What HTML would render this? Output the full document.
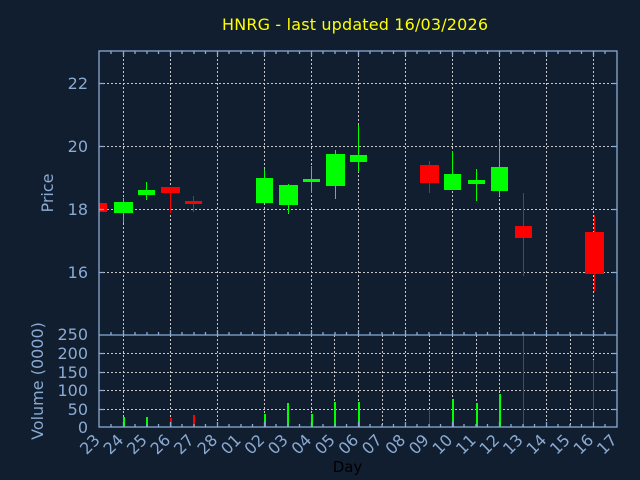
<!DOCTYPE html>
<html><head><meta charset="utf-8"><style>
html,body{margin:0;padding:0;background:#101e2f;}
svg{display:block;}
text{font-family:"DejaVu Sans","Liberation Sans",sans-serif;}
</style></head><body>
<svg width="640" height="480" viewBox="0 0 640 480" xmlns="http://www.w3.org/2000/svg">
<rect width="640" height="480" fill="#101e2f"/>
<text x="355" y="30" font-size="16" fill="#ffff00" text-anchor="middle" textLength="266">HNRG - last updated 16/03/2026</text>

<g stroke="#c8c8c8" stroke-width="1" stroke-dasharray="2,2" fill="none" shape-rendering="crispEdges">
<path d="M99 83.5H617M99 146.5H617M99 209.5H617M99 272.5H617"/>
<path d="M123.5 51V335M170.5 51V335M217.5 51V335M264.5 51V335M311.5 51V335M358.5 51V335M405.5 51V335M452.5 51V335M499.5 51V335M546.5 51V335M593.5 51V335"/>
<path d="M99 409.5H617M99 390.5H617M99 372.5H617M99 353.5H617"/>
<path d="M123.5 335V427M170.5 335V427M217.5 335V427M264.5 335V427M311.5 335V427M358.5 335V427M405.5 335V427M452.5 335V427M499.5 335V427M546.5 335V427M593.5 335V427M334.5 335V427M382.5 335V427M429.5 335V427M476.5 335V427M523.5 335V427M570.5 335V427"/>
</g>

<g fill="#ff0000" stroke="none" shape-rendering="crispEdges">
<rect x="99" y="203" width="8" height="9"/>
<rect x="170" y="187" width="1" height="26"/><rect x="161" y="187" width="19" height="6"/>
<rect x="193" y="196" width="1" height="16"/><rect x="185" y="201" width="17" height="3"/>
<rect x="429" y="161" width="1" height="32"/><rect x="420" y="165" width="19" height="18"/>
<rect x="523" y="193" width="1" height="83"/><rect x="515" y="226" width="17" height="12"/>
<rect x="594" y="215" width="1" height="77"/><rect x="585" y="232" width="19" height="42"/>
</g>
<g fill="#00ff00" stroke="none" shape-rendering="crispEdges">
<rect x="123" y="198" width="1" height="25"/><rect x="114" y="202" width="19" height="11"/>
<rect x="146" y="182" width="1" height="18"/><rect x="138" y="190" width="17" height="5"/>
<rect x="264" y="169" width="1" height="34"/><rect x="256" y="178" width="17" height="25"/>
<rect x="288" y="184" width="1" height="30"/><rect x="279" y="185" width="19" height="20"/>
<rect x="311" y="166" width="1" height="27"/><rect x="303" y="179" width="17" height="3"/>
<rect x="335" y="150" width="1" height="49"/><rect x="326" y="154" width="19" height="32"/>
<rect x="358" y="125" width="1" height="47"/><rect x="350" y="155" width="17" height="7"/>
<rect x="452" y="151" width="1" height="39"/><rect x="444" y="174" width="17" height="16"/>
<rect x="476" y="169" width="1" height="32"/><rect x="468" y="180" width="17" height="4"/>
<rect x="499" y="141" width="1" height="55"/><rect x="491" y="167" width="17" height="24"/>
</g>

<g shape-rendering="crispEdges">
<g fill="#00ff00">
<rect x="123" y="417" width="2" height="10"/><rect x="146" y="417" width="2" height="10"/>
<rect x="264" y="414" width="2" height="13"/><rect x="287" y="403" width="2" height="24"/>
<rect x="311" y="414" width="2" height="13"/><rect x="334" y="402" width="2" height="25"/>
<rect x="358" y="402" width="2" height="25"/><rect x="452" y="399" width="2" height="28"/>
<rect x="476" y="403" width="2" height="24"/><rect x="499" y="394" width="2" height="33"/>
</g>
<g fill="#ff0000">
<rect x="170" y="418" width="2" height="9"/><rect x="193" y="415" width="2" height="12"/>
<rect x="429" y="410" width="1" height="17"/><rect x="523" y="335" width="1" height="92"/>
<rect x="593" y="360" width="1" height="67"/>
</g>
</g>

<g stroke="#8aaad2" stroke-width="1.3" fill="none">
<rect x="99" y="51" width="518" height="376"/>
<path d="M99 335H617"/>
<path d="M99 83.5h5M99 146.5h5M99 209.5h5M99 272.5h5M612 83.5h5M612 146.5h5M612 209.5h5M612 272.5h5"/>
<path d="M99 409.5h5M99 390.5h5M99 372.5h5M99 353.5h5M612 409.5h5M612 390.5h5M612 372.5h5M612 353.5h5"/>
<path d="M111 51v3M123.5 51v5M135 51v3M147 51v3M158.5 51v3M170.5 51v5M182 51v3M194 51v3M205.5 51v3M217.5 51v5M229 51v3M241 51v3M252.5 51v3M264.5 51v5M276 51v3M288 51v3M299.5 51v3M311.5 51v5M323 51v3M335 51v3M346.5 51v3M358.5 51v5M370 51v3M382 51v3M393.5 51v3M405.5 51v5M417 51v3M429 51v3M440.5 51v3M452.5 51v5M464 51v3M476 51v3M487.5 51v3M499.5 51v5M511 51v3M523 51v3M534.5 51v3M546.5 51v5M558 51v3M570 51v3M581.5 51v3M593.5 51v5M605 51v3"/>
<path d="M111 335v-3M123.5 335v-5M135 335v-3M147 335v-3M158.5 335v-3M170.5 335v-5M182 335v-3M194 335v-3M205.5 335v-3M217.5 335v-5M229 335v-3M241 335v-3M252.5 335v-3M264.5 335v-5M276 335v-3M288 335v-3M299.5 335v-3M311.5 335v-5M323 335v-3M335 335v-3M346.5 335v-3M358.5 335v-5M370 335v-3M382 335v-3M393.5 335v-3M405.5 335v-5M417 335v-3M429 335v-3M440.5 335v-3M452.5 335v-5M464 335v-3M476 335v-3M487.5 335v-3M499.5 335v-5M511 335v-3M523 335v-3M534.5 335v-3M546.5 335v-5M558 335v-3M570 335v-3M581.5 335v-3M593.5 335v-5M605 335v-3"/>
<path d="M111 427v-3M123.5 427v-5M135 427v-3M147 427v-3M158.5 427v-3M170.5 427v-5M182 427v-3M194 427v-3M205.5 427v-3M217.5 427v-5M229 427v-3M241 427v-3M252.5 427v-3M264.5 427v-5M276 427v-3M288 427v-3M299.5 427v-3M311.5 427v-5M323 427v-3M335 427v-3M346.5 427v-3M358.5 427v-5M370 427v-3M382 427v-3M393.5 427v-3M405.5 427v-5M417 427v-3M429 427v-3M440.5 427v-3M452.5 427v-5M464 427v-3M476 427v-3M487.5 427v-3M499.5 427v-5M511 427v-3M523 427v-3M534.5 427v-3M546.5 427v-5M558 427v-3M570 427v-3M581.5 427v-3M593.5 427v-5M605 427v-3"/>
</g>

<g fill="#8aaad2" font-size="16" text-anchor="end">
<text x="88" y="89">22</text>
<text x="88" y="152">20</text>
<text x="88" y="215">18</text>
<text x="88" y="278">16</text>
<text x="88" y="340">250</text>
<text x="88" y="359">200</text>
<text x="88" y="378">150</text>
<text x="88" y="396">100</text>
<text x="88" y="415">50</text>
<text x="88" y="433">0</text>
</g>
<text transform="translate(53,193) rotate(-90)" fill="#8aaad2" font-size="16" text-anchor="middle">Price</text>
<text transform="translate(43,381) rotate(-90)" fill="#8aaad2" font-size="16" text-anchor="middle">Volume (0000)</text>

<g fill="#8aaad2" font-size="16" text-anchor="end">
<text transform="translate(101,441) rotate(-45)">23</text>
<text transform="translate(124.5,441) rotate(-45)">24</text>
<text transform="translate(148,441) rotate(-45)">25</text>
<text transform="translate(171.5,441) rotate(-45)">26</text>
<text transform="translate(195,441) rotate(-45)">27</text>
<text transform="translate(218.5,441) rotate(-45)">28</text>
<text transform="translate(242,441) rotate(-45)">01</text>
<text transform="translate(265.5,441) rotate(-45)">02</text>
<text transform="translate(289,441) rotate(-45)">03</text>
<text transform="translate(312.5,441) rotate(-45)">04</text>
<text transform="translate(336,441) rotate(-45)">05</text>
<text transform="translate(359.5,441) rotate(-45)">06</text>
<text transform="translate(383,441) rotate(-45)">07</text>
<text transform="translate(406.5,441) rotate(-45)">08</text>
<text transform="translate(430,441) rotate(-45)">09</text>
<text transform="translate(453.5,441) rotate(-45)">10</text>
<text transform="translate(477,441) rotate(-45)">11</text>
<text transform="translate(500.5,441) rotate(-45)">12</text>
<text transform="translate(524,441) rotate(-45)">13</text>
<text transform="translate(547.5,441) rotate(-45)">14</text>
<text transform="translate(571,441) rotate(-45)">15</text>
<text transform="translate(594.5,441) rotate(-45)">16</text>
<text transform="translate(618,441) rotate(-45)">17</text>
</g>
<text x="347.5" y="472" fill="#000000" font-size="15" text-anchor="middle">Day</text>
</svg>
</body></html>
